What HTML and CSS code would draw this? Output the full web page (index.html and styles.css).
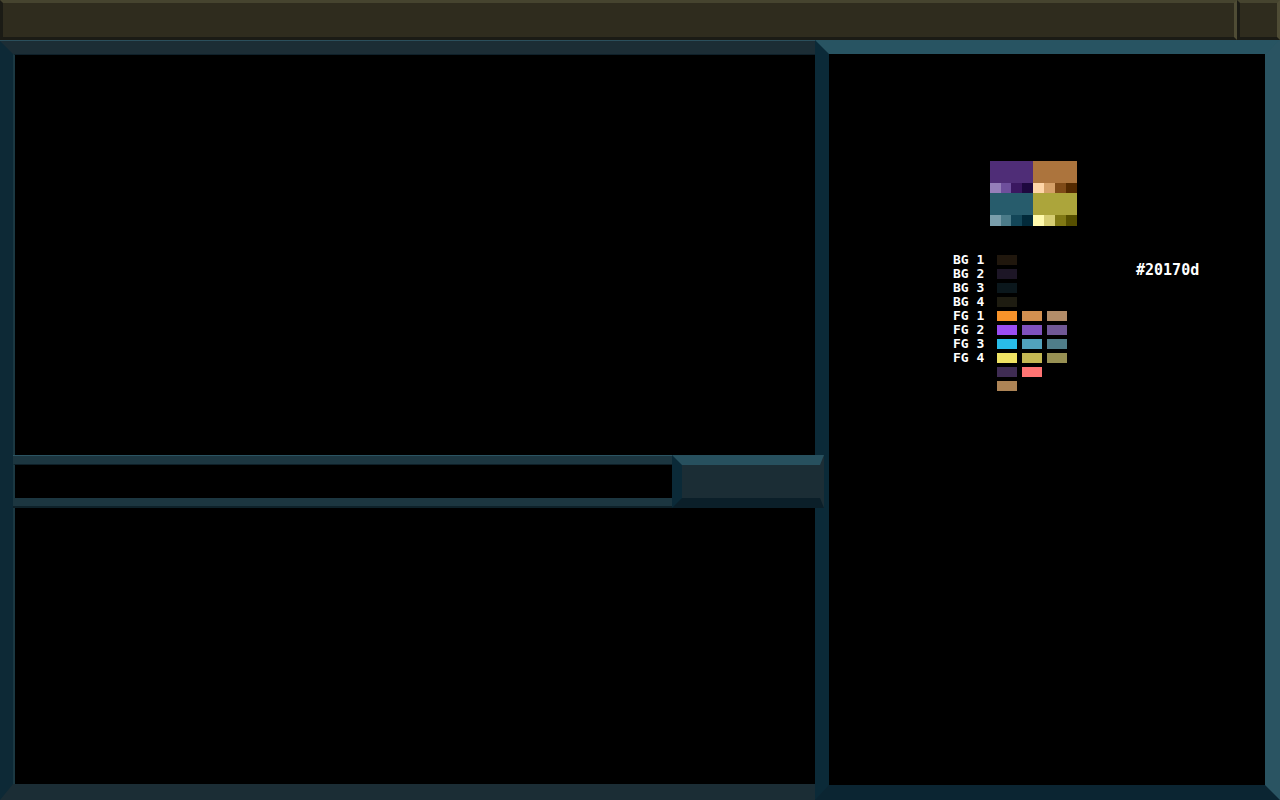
FILE: index.html
```html
<!DOCTYPE html>
<html lang="en">
<head>
<meta charset="utf-8">
<title>Palette</title>
<link rel="stylesheet" href="styles.css">
</head>
<body>
<div class="topbar">
  <div class="seg seg-main"></div>
  <div class="seg seg-side"></div>
</div>
<div class="main">
  <div class="left">
    <div class="left-frame">
      <div class="output"></div>
      <div class="inputrow">
        <div class="field"><div class="field-box"></div></div>
        <div class="btn"></div>
      </div>
      <div class="output lower"></div>
    </div>
  </div>
  <div class="right">
    <div class="palette">
      <div class="big purple"></div>
      <div class="big orange"></div>
      <div class="pu1"></div><div class="pu2"></div><div class="pu3"></div><div class="pu4"></div>
      <div class="or1"></div><div class="or2"></div><div class="or3"></div><div class="or4"></div>
      <div class="big teal"></div>
      <div class="big olive"></div>
      <div class="te1"></div><div class="te2"></div><div class="te3"></div><div class="te4"></div>
      <div class="ol1"></div><div class="ol2"></div><div class="ol3"></div><div class="ol4"></div>
    </div>
    <div class="legendrow">
      <div class="legend">
        <div class="lbl">BG 1</div><div class="sw bg1"></div><div></div><div></div>
        <div class="lbl">BG 2</div><div class="sw bg2"></div><div></div><div></div>
        <div class="lbl">BG 3</div><div class="sw bg3"></div><div></div><div></div>
        <div class="lbl">BG 4</div><div class="sw bg4"></div><div></div><div></div>
        <div class="lbl">FG 1</div><div class="sw f1a"></div><div class="sw f1b"></div><div class="sw f1c"></div>
        <div class="lbl">FG 2</div><div class="sw f2a"></div><div class="sw f2b"></div><div class="sw f2c"></div>
        <div class="lbl">FG 3</div><div class="sw f3a"></div><div class="sw f3b"></div><div class="sw f3c"></div>
        <div class="lbl">FG 4</div><div class="sw f4a"></div><div class="sw f4b"></div><div class="sw f4c"></div>
        <div class="lbl"></div><div class="sw x1"></div><div class="sw x2"></div><div></div>
        <div class="lbl"></div><div class="sw x3"></div><div></div><div></div>
      </div>
      <div class="hex">#20170d</div>
    </div>
  </div>
</div>
</body>
</html>
```
FILE: styles.css
```css
html, body {
  margin: 0;
  padding: 0;
  background: #000;
  width: 1280px;
  height: 800px;
  overflow: hidden;
}

.topbar {
  display: flex;
  height: 40px;
}

.seg {
  box-sizing: border-box;
  height: 40px;
  background: #2f2c1e;
  border: 3px solid;
  border-color: #46442f #4f4c35 #1b1b15 #1b1b15;
}

.seg-main { width: 1237px; }
.seg-side { flex: 1; }

.main {
  display: flex;
  height: 760px;
}

.left {
  width: 815px;
  box-sizing: border-box;
  border-top: 1px solid #2b4f5c;
  display: flex;
}

.left-frame {
  flex: 1;
  display: flex;
  flex-direction: column;
  border-left: 13px solid #0d2936;
  border-top: 13px solid #1c2d35;
  border-bottom: 16px solid #1b2d35;
}

.output {
  box-sizing: border-box;
  height: 401px;
  background: #000;
  border-top: 1px solid #0f2029;
  border-left: 2px solid #1b3842;
}

.output.lower {
  flex: 1;
  height: auto;
  border-top: 0;
}

.inputrow {
  display: flex;
  height: 53px;
}

.field {
  flex: 1;
  border-top: 1px solid #2b5462;
  border-bottom: 2px solid #0e2129;
  background: #1c3640;
  padding: 8px 0;
}

.field-box {
  box-sizing: border-box;
  height: 34px;
  background: #000;
  border-top: 1px solid #0e1f27;
  border-left: 2px solid #1b3842;
}

.btn {
  box-sizing: border-box;
  width: 152px;
  height: 53px;
  margin-right: -9px;
  position: relative;
  z-index: 1;
  background: #1b2d35;
  border-style: solid;
  border-width: 10px 4px 10px 10px;
  border-color: #27505e #1c2e36 #0b1f29 #0b2a38;
}

.right {
  flex: 1;
  box-sizing: border-box;
  background: #000;
  border-style: solid;
  border-width: 14px 15px 15px 14px;
  border-color: #285462 #2a5462 #0b2532 #0b2a38;
}

.palette {
  display: grid;
  grid-template-columns: 11px 10px 11px 11px 11px 11px 11px 11px;
  grid-template-rows: 22px 10px 22px 11px;
  width: 87px;
  margin: 107px 0 0 161px;
}

.big { grid-column: span 4; }

.purple { background: #4f2d77; }
.orange { background: #ac743d; }
.teal { background: #275c6c; }
.olive { background: #aca53b; }

.pu1 { background: #957fba; }
.pu2 { background: #6e4f9c; }
.pu3 { background: #3a1760; }
.pu4 { background: #1e083f; }
.or1 { background: #ffd6a8; }
.or2 { background: #d5a068; }
.or3 { background: #7f4a17; }
.or4 { background: #532900; }
.te1 { background: #7a9eab; }
.te2 { background: #4b7b89; }
.te3 { background: #134658; }
.te4 { background: #022a3a; }
.ol1 { background: #fffaae; }
.ol2 { background: #d6cd72; }
.ol3 { background: #807814; }
.ol4 { background: #564f00; }

.legendrow {
  display: flex;
  align-items: flex-start;
  margin: 27px 0 0 124px;
}

.legend {
  display: grid;
  grid-template-columns: 39px 20px 20px 20px;
  grid-auto-rows: 14px;
  column-gap: 5px;
  align-items: center;
}

.lbl, .hex {
  font-family: "DejaVu Sans Mono", monospace;
  font-weight: bold;
  color: #fff;
  white-space: nowrap;
}

.lbl {
  font-size: 13px;
  line-height: 14px;
}

.sw { height: 10px; }

.bg1 { background: #20170d; }
.bg2 { background: #1d1626; }
.bg3 { background: #0b171c; }
.bg4 { background: #1e1c11; }
.f1a { background: #f8932a; }
.f1b { background: #d39050; }
.f1c { background: #b38d69; }
.f2a { background: #9a4df3; }
.f2b { background: #7f51be; }
.f2c { background: #705896; }
.f3a { background: #29bde9; }
.f3b { background: #51a2bc; }
.f3c { background: #4f7d89; }
.f4a { background: #efe263; }
.f4b { background: #c4b853; }
.f4c { background: #979053; }
.x1 { background: #3f2c53; }
.x2 { background: #ff7473; }
.x3 { background: #ad8456; }

.hex {
  font-size: 15px;
  line-height: 14px;
  margin: 10px 0 0 69px;
}
```
